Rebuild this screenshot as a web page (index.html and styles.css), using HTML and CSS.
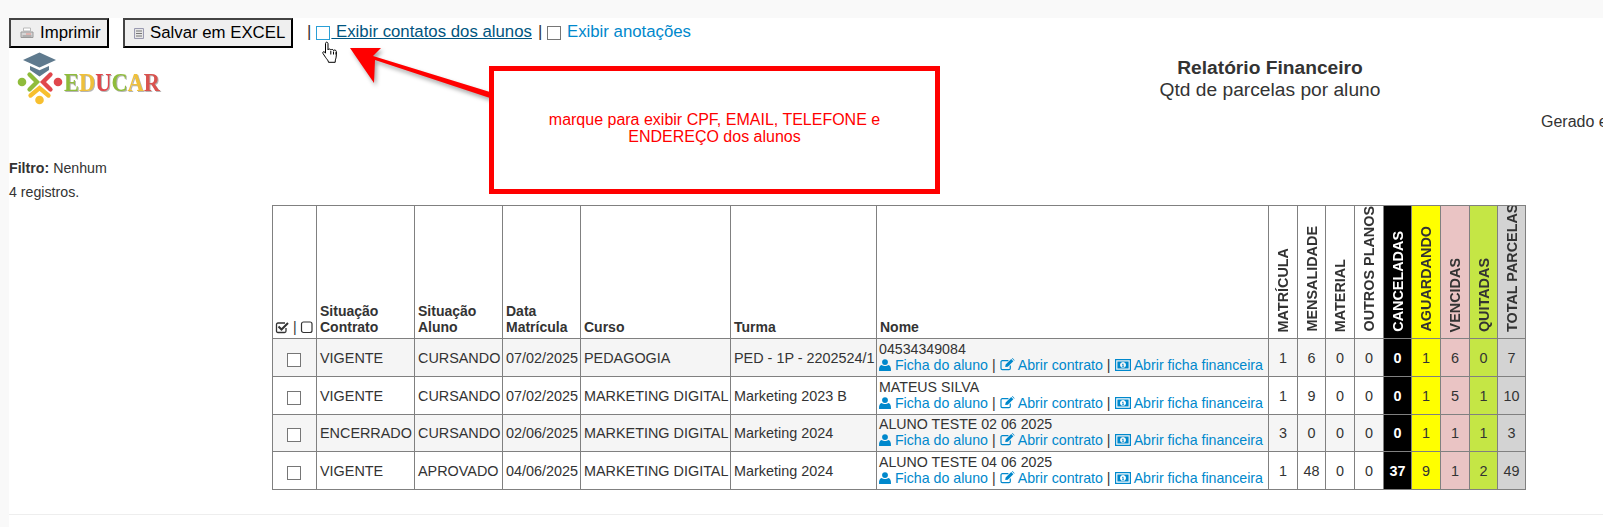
FILE: index.html
```html
<!DOCTYPE html>
<html lang="pt-BR">
<head>
<meta charset="utf-8">
<title>Relatório Financeiro</title>
<link rel="stylesheet" href="styles.css">
</head>
<body>
<svg class="defs" width="0" height="0" aria-hidden="true">
  <symbol id="i-user" viewBox="0 0 14 14"><circle cx="7" cy="3.6" r="3.4"/><path d="M0.6 14c-.4 0-.6-.3-.6-.7 0-3.4.8-6 3.3-6.2C4.2 7.800 5.500 8.300 7 8.300s2.800-.5 3.700-1.200c2.500.2 3.300 2.800 3.300 6.200 0 .4-.2.7-.6.7z"/></symbol>
  <symbol id="i-edit" viewBox="0 0 16 14"><path d="M11 8v3.200c0 .9-.7 1.300-1.400 1.300H2.400c-.8 0-1.400-.6-1.400-1.400V4.300c0-.8.6-1.400 1.400-1.400H9" fill="none" stroke="currentColor" stroke-width="1.300"/><path d="M5.500 9.800l.5-2.700 6-6 2.300 2.300-6 6zM12.700.4l.7-.4 2.300 2.300-.6.700z"/></symbol>
  <symbol id="i-money" viewBox="0 0 16 12"><path fill-rule="evenodd" d="M0 0h16v12H0zM1.200 1.200v9.600h13.600V1.200z"/><path fill-rule="evenodd" d="M2.400 2.400h11.200v7.200H2.400zM8 3a3 3 0 1 0 .01 0zM7.200 4.700h1.300v2.800h.6v.8H7v-.8h.6V5.800l-.5.300z"/></symbol>
  <symbol id="i-checked" viewBox="0 0 14 14"><path d="M11 8v3c0 1-.7 1.500-1.500 1.500H3C2 12.500 1.500 12 1.500 11V4.500C1.500 3.500 2 3 3 3h7" fill="none" stroke="currentColor" stroke-width="1.300"/><path d="M3.500 6.500l3 3 6.500-6.500" fill="none" stroke="currentColor" stroke-width="2"/></symbol>
  <symbol id="i-empty" viewBox="0 0 14 14"><rect x="1.500" y="2" width="10.500" height="10.500" rx="2" fill="none" stroke="currentColor" stroke-width="1.200"/></symbol>
</svg>

<div class="page">
  <div class="toolbar">
    <button class="btn" type="button">
      <svg class="btn-icon" viewBox="0 0 14 12" aria-hidden="true"><path d="M3.500 1h7v3h-7z" fill="#fff" stroke="#b9b9b9"/><path d="M1 5h12v5.500H1z" fill="#d5d5d5" stroke="#999"/><path d="M6 7h5" stroke="#e8918a"/><path d="M2.500 9h9" stroke="#8a8a8a"/></svg>
      Imprimir
    </button>
    <button class="btn btn-excel" type="button">
      <svg class="btn-icon btn-icon-excel" viewBox="0 0 10 11" aria-hidden="true"><path d="M.5.500h9v10h-9z" fill="#e6e6e6" stroke="#9a9ab0"/><path d="M2 3h6M2 5.500h6M2 8h6" stroke="#777"/></svg>
      Salvar em EXCEL
    </button>
    <div class="options">
      <span class="sep">|</span>
      <input class="check check-hover" type="checkbox" aria-label="Exibir contatos dos alunos">
      <a class="opt-link opt-link-hover" href="#">&nbsp;Exibir contatos dos alunos</a>
      <span class="sep">|</span>
      <input class="check" type="checkbox" aria-label="Exibir anotações">
      <a class="opt-link" href="#">&nbsp;Exibir anotações</a>
    </div>
  </div>

  <div class="report-head">
    <svg class="logo" viewBox="10 50 152 60" role="img" aria-label="Educar">
      <path d="M23 60l16.500-7.500L56 60l-16.500 7.500z" fill="#5f7a8e"/>
      <path d="M30 66l9.500 4.300L49 66v4l-9.500 6.500L30 70z" fill="#5f7a8e"/>
      <path d="M29.500 74.500l7.500 7.500-7.500 7.500" fill="none" stroke="#8fbc3b" stroke-width="4.300" stroke-linecap="round"/>
      <path d="M50.500 74.500l-7.500 7.500 7.500 7.500" fill="none" stroke="#e0474c" stroke-width="4.300" stroke-linecap="round"/>
      <path d="M30.500 95.500l9-7.500 9 7.500" fill="none" stroke="#f7bf2f" stroke-width="4.300" stroke-linecap="round"/>
      <circle cx="22" cy="82" r="4.300" fill="#8fbc3b"/>
      <circle cx="58" cy="82" r="4.300" fill="#e0474c"/>
      <circle cx="39.500" cy="100" r="4.300" fill="#f7bf2f"/>
      <text class="logo-text" x="64" y="91" textLength="96" lengthAdjust="spacingAndGlyphs"><tspan fill="#8fbc3b">E</tspan><tspan fill="#efc03a">D</tspan><tspan fill="#e0474c">U</tspan><tspan fill="#8fbc3b">C</tspan><tspan fill="#efc03a">A</tspan><tspan fill="#d9534f">R</tspan></text>
    </svg>
    <div class="report-title">
      <strong class="title-main">Relatório Financeiro</strong>
      <span class="title-sub">Qtd de parcelas por aluno</span>
    </div>
  </div>
  <p class="generated">Gerado em</p>

  <p class="meta meta-filter"><strong>Filtro:</strong> Nenhum</p>
  <p class="meta">4 registros.</p>

  <table class="report">
    <colgroup>
      <col class="c-check"><col class="c-contract"><col class="c-student"><col class="c-date"><col class="c-course"><col class="c-class"><col class="c-name">
      <col class="c-n1"><col class="c-n2"><col class="c-n3"><col class="c-n4"><col class="c-n5"><col class="c-n6"><col class="c-n7"><col class="c-n8"><col class="c-n9">
    </colgroup>
    <thead>
      <tr>
        <th class="th-check"><svg class="ico-head" aria-hidden="true"><use href="#i-checked"/></svg> | <svg class="ico-head" aria-hidden="true"><use href="#i-empty"/></svg></th>
        <th>Situação<br>Contrato</th>
        <th>Situação<br>Aluno</th>
        <th>Data<br>Matrícula</th>
        <th>Curso</th>
        <th>Turma</th>
        <th>Nome</th>
        <th class="v"><span>MATRÍCULA</span></th>
        <th class="v"><span>MENSALIDADE</span></th>
        <th class="v"><span>MATERIAL</span></th>
        <th class="v"><span>OUTROS PLANOS</span></th>
        <th class="v cancel"><span>CANCELADAS</span></th>
        <th class="v wait"><span>AGUARDANDO</span></th>
        <th class="v late"><span>VENCIDAS</span></th>
        <th class="v paid"><span>QUITADAS</span></th>
        <th class="v total"><span>TOTAL PARCELAS</span></th>
      </tr>
    </thead>
    <tbody>
      <tr>
        <td class="td-check"><input class="check" type="checkbox" aria-label="Selecionar"></td>
        <td>VIGENTE</td><td>CURSANDO</td><td>07/02/2025</td><td>PEDAGOGIA</td><td>PED - 1P - 2202524/1</td>
        <td class="name">04534349084<br><a href="#"><svg class="ico ico-user" aria-hidden="true"><use href="#i-user"/></svg> Ficha do aluno</a> | <a href="#"><svg class="ico ico-edit" aria-hidden="true"><use href="#i-edit"/></svg> Abrir contrato</a> | <a href="#"><svg class="ico ico-money" aria-hidden="true"><use href="#i-money"/></svg> Abrir ficha financeira</a></td>
        <td class="n">1</td><td class="n">6</td><td class="n">0</td><td class="n">0</td><td class="n cancel">0</td><td class="n wait">1</td><td class="n late">6</td><td class="n paid">0</td><td class="n total">7</td>
      </tr>
      <tr>
        <td class="td-check"><input class="check" type="checkbox" aria-label="Selecionar"></td>
        <td>VIGENTE</td><td>CURSANDO</td><td>07/02/2025</td><td>MARKETING DIGITAL</td><td>Marketing 2023 B</td>
        <td class="name">MATEUS SILVA<br><a href="#"><svg class="ico ico-user" aria-hidden="true"><use href="#i-user"/></svg> Ficha do aluno</a> | <a href="#"><svg class="ico ico-edit" aria-hidden="true"><use href="#i-edit"/></svg> Abrir contrato</a> | <a href="#"><svg class="ico ico-money" aria-hidden="true"><use href="#i-money"/></svg> Abrir ficha financeira</a></td>
        <td class="n">1</td><td class="n">9</td><td class="n">0</td><td class="n">0</td><td class="n cancel">0</td><td class="n wait">1</td><td class="n late">5</td><td class="n paid">1</td><td class="n total">10</td>
      </tr>
      <tr>
        <td class="td-check"><input class="check" type="checkbox" aria-label="Selecionar"></td>
        <td>ENCERRADO</td><td>CURSANDO</td><td>02/06/2025</td><td>MARKETING DIGITAL</td><td>Marketing 2024</td>
        <td class="name">ALUNO TESTE 02 06 2025<br><a href="#"><svg class="ico ico-user" aria-hidden="true"><use href="#i-user"/></svg> Ficha do aluno</a> | <a href="#"><svg class="ico ico-edit" aria-hidden="true"><use href="#i-edit"/></svg> Abrir contrato</a> | <a href="#"><svg class="ico ico-money" aria-hidden="true"><use href="#i-money"/></svg> Abrir ficha financeira</a></td>
        <td class="n">3</td><td class="n">0</td><td class="n">0</td><td class="n">0</td><td class="n cancel">0</td><td class="n wait">1</td><td class="n late">1</td><td class="n paid">1</td><td class="n total">3</td>
      </tr>
      <tr>
        <td class="td-check"><input class="check" type="checkbox" aria-label="Selecionar"></td>
        <td>VIGENTE</td><td>APROVADO</td><td>04/06/2025</td><td>MARKETING DIGITAL</td><td>Marketing 2024</td>
        <td class="name">ALUNO TESTE 04 06 2025<br><a href="#"><svg class="ico ico-user" aria-hidden="true"><use href="#i-user"/></svg> Ficha do aluno</a> | <a href="#"><svg class="ico ico-edit" aria-hidden="true"><use href="#i-edit"/></svg> Abrir contrato</a> | <a href="#"><svg class="ico ico-money" aria-hidden="true"><use href="#i-money"/></svg> Abrir ficha financeira</a></td>
        <td class="n">1</td><td class="n">48</td><td class="n">0</td><td class="n">0</td><td class="n cancel">37</td><td class="n wait">9</td><td class="n late">1</td><td class="n paid">2</td><td class="n total">49</td>
      </tr>
    </tbody>
  </table>
  <hr class="rule">

  <svg class="arrow" viewBox="0 0 160 60" aria-hidden="true"><path d="M1 1h31l-8 8 117 36v6L26 13l-1 23z" fill="#f00"/></svg>
  <svg class="cursor" viewBox="0 0 18 23" aria-hidden="true"><path d="M4.500 1.200c1 0 1.500.6 1.500 1.500v6.200c.3-1.200 2.600-1.200 2.800.2.500-1 2.500-.9 2.700.4.600-.8 2.600-.6 2.800.9.200 1.700.2 4.700-.3 6.500-.4 1.400-.8 2.300-.8 4.400H6.500c-.2-2-1.700-3-3-5L1 12.500c-.8-1.400.7-2.500 1.800-1.300l.7 1V2.700c0-1 .5-1.500 1-1.500z" fill="#fff" stroke="#000"/><path d="M8.800 10v3.500M11.500 10.500v3M14 11.200v2.500" stroke="#000" fill="none"/></svg>
  <div class="callout">marque para exibir CPF, EMAIL, TELEFONE e ENDEREÇO dos alunos</div>
</div>
</body>
</html>
```

FILE: styles.css
```css
* { box-sizing: border-box; }
html, body { height: 100%; }
body {
  margin: 0;
  background: #f9f9f9;
  font-family: "Liberation Sans", Arial, sans-serif;
  color: #333;
  overflow: hidden;
}
.defs { position: absolute; }
.page {
  position: relative;
  margin: 18px 0 0 9px;
  height: 509px;
  background: #fff;
}
.toolbar { display: flex; align-items: flex-start; height: 30px; }
.btn {
  display: flex;
  align-items: center;
  gap: 6px;
  height: 30px;
  width: 100px;
  padding: 0 0 0 9px;
  border: 2px solid;
  border-color: #444 #000 #000 #444;
  background: #efefef;
  color: #000;
  font: 16.800px "Liberation Sans", Arial, sans-serif;
}
.btn-excel { width: 170px; margin-left: 14px; }
.btn-icon { width: 14px; height: 12px; }
.btn-icon-excel { width: 10px; height: 11px; }
.options {
  display: flex;
  align-items: center;
  margin-left: 13px;
  padding-top: 4px;
  font-size: 16.800px;
  line-height: 19px;
  white-space: pre;
}
.sep { margin-right: 5px; margin-left: 1px; }
.check {
  appearance: none;
  display: block;
  flex: none;
  width: 14px;
  height: 14px;
  margin: 2px 1px 0 0;
  border: 1px solid #767676;
  background: #fff;
}
.check-hover { border: 1px solid #2a9fd6; }
.opt-link { color: #0088cc; text-decoration: none; margin-right: 5px; }
.opt-link-hover { color: #005580; text-decoration: underline; }

.report-head { display: flex; height: 60px; margin-top: 2px; }
.logo { flex: none; width: 152px; height: 60px; margin-left: 1px; }
.logo-text {
  font: bold 25px "Liberation Serif", serif;
  filter: drop-shadow(1px 1px 0 rgba(90,90,90,.45));
}
.report-title {
  width: 400px;
  margin-left: 908px;
  padding-top: 7px;
  text-align: center;
  font-size: 19.200px;
  line-height: 22px;
}
.title-main, .title-sub { display: block; }
.generated {
  margin: 0;
  padding: 2px 0 0 1532px;
  font-size: 16px;
  line-height: 20px;
  white-space: nowrap;
}
.meta { margin: 0; font-size: 14.200px; line-height: 24px; }
.meta-filter { margin-top: 24px; }

.report {
  margin: 1px 0 0 263px;
  border-collapse: collapse;
  table-layout: fixed;
  width: 1254px;
  font-size: 14.400px;
  line-height: 16px;
}
.report th, .report td { border: 1px solid #808080; }
.report th {
  height: 133px;
  padding: 0 3px 3px;
  vertical-align: bottom;
  text-align: left;
  font-size: 14px;
  font-weight: bold;
}
.report td { height: 38px; padding: 0 3px; white-space: nowrap; overflow: hidden; }
.report tbody tr:nth-child(odd) { background: #f5f5f5; }
.report tbody tr:nth-child(3) td { height: 37px; }
.c-check { width: 44px; }
.c-contract { width: 98px; }
.c-student { width: 88px; }
.c-date { width: 78px; }
.c-course { width: 150px; }
.c-class { width: 146px; }
.c-name { width: 392px; }
.c-n1 { width: 29px; }
.c-n2 { width: 28px; }
.c-n3 { width: 29px; }
.c-n4 { width: 29px; }
.c-n5 { width: 28px; }
.c-n6 { width: 29px; }
.c-n7 { width: 29px; }
.c-n8 { width: 28px; }
.c-n9 { width: 28px; }
.report .th-check { white-space: nowrap; font-weight: normal; padding-left: 2px; }
.ico-head { width: 14px; height: 14px; vertical-align: -2px; }
.report .v { padding: 0 0 6px; text-align: center; overflow: hidden; font-size: 14.400px; line-height: 16px; }
.v span {
  display: inline-block;
  writing-mode: vertical-rl;
  transform: rotate(180deg);
  white-space: nowrap;
  vertical-align: bottom;
  max-height: 126px;
  overflow: hidden;
}
.report .td-check { padding: 2px 0 0 14px; }
.report .n { padding: 0; text-align: center; }
.report .name { padding: 0 2px 2px; vertical-align: middle; font-size: 14.200px; }
.name a { color: #0088cc; text-decoration: none; }
.ico { display: inline-block; fill: currentColor; vertical-align: -1px; }
.ico-user { width: 12px; height: 12px; }
.ico-edit { width: 15px; height: 13px; }
.ico-money { width: 16px; height: 12px; }
.report .cancel { background: #000; color: #fff; }
.report .n.cancel { font-weight: bold; }
.report .wait { background: #ff0; }
.report .late { background: #eac4c4; }
.report .paid { background: #c5e645; }
.report .total { background: #d3d3d3; }
.rule { margin: 24px 0 0; border: 0; border-top: 1px solid #eee; }

.arrow {
  position: absolute;
  left: 340px;
  top: 29px;
  width: 160px;
  height: 60px;
  filter: drop-shadow(2px 3px 2px rgba(0,0,0,.35));
}
.cursor { position: absolute; left: 313px; top: 23px; width: 18px; height: 23px; }
.callout {
  position: absolute;
  left: 480px;
  top: 48px;
  display: flex;
  align-items: center;
  justify-content: center;
  width: 451px;
  height: 128px;
  padding: 0 45px 4px;
  border: 5px solid #f00;
  background: #fff;
  color: #f00;
  font-size: 16px;
  line-height: 17px;
  text-align: center;
}
```
